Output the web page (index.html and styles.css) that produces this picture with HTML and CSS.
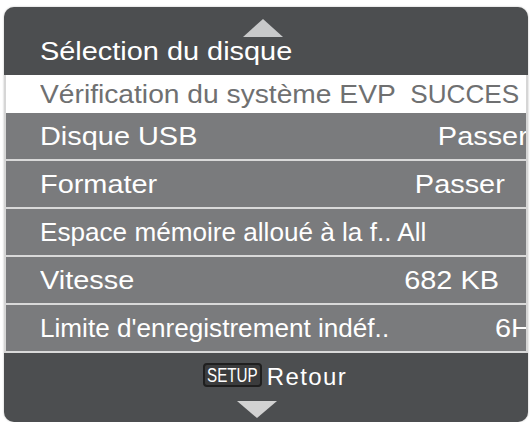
FILE: index.html
```html
<!DOCTYPE html>
<html lang="fr">
<head>
<meta charset="utf-8">
<title>Sélection du disque</title>
<link rel="stylesheet" href="styles.css">
</head>
<body>
<div class="panel">
  <div class="head">
    <span class="tri tri-up"></span>
    <div class="title"><span class="t wide">Sélection du disque</span></div>
  </div>
  <div class="list">
    <div class="row sel"><span class="t lab wide2">Vérification du système EVP</span><span class="t val narrow v-succes">SUCCES</span></div>
    <div class="row"><span class="t lab wide">Disque USB</span><span class="t val wide v-usb">Passer</span></div>
    <div class="row"><span class="t lab wide">Formater</span><span class="t val wide v-format">Passer</span></div>
    <div class="row"><span class="t lab narrow">Espace mémoire alloué à la f.. All</span></div>
    <div class="row"><span class="t lab wide">Vitesse</span><span class="t val wide v-speed">682 KB</span></div>
    <div class="row"><span class="t lab narrow">Limite d'enregistrement indéf..</span><span class="t val wide v-limit">6H</span></div>
  </div>
  <div class="foot">
    <div class="back">
      <span class="key"><span class="key-text">SETUP</span></span>
      <span class="retour">Retour</span>
    </div>
    <span class="tri tri-down"></span>
  </div>
</div>
</body>
</html>
```
FILE: styles.css
```css
body {
  margin: 0;
  background: #ffffff;
  font-family: "Liberation Sans", Arial, Helvetica, sans-serif;
}

.panel {
  margin: 7px 4px 0 4px;
  width: 524px;
  height: 415px;
  border-radius: 10px;
  overflow: hidden;
  background: #4c4e50;
  display: flex;
  flex-direction: column;
  box-shadow: 0 0 2px rgba(0, 0, 0, 0.3);
}

.head {
  height: 68px;
  box-sizing: border-box;
  padding-top: 12px;
  display: flex;
  flex-direction: column;
}

.tri {
  display: block;
  width: 0;
  height: 0;
  border-left: 20px solid transparent;
  border-right: 20px solid transparent;
}

.tri-up {
  align-self: center;
  margin-right: 6px;
  border-bottom: 18px solid #c8c9ca;
}

.title {
  height: 28px;
  line-height: 28px;
  padding-left: 36px;
  color: #ffffff;
  font-size: 25px;
  white-space: nowrap;
}

.list {
  border-left: 2px solid #d6d6d6;
  border-right: 2px solid #d6d6d6;
}

.row {
  display: flex;
  justify-content: space-between;
  align-items: center;
  height: 46px;
  border-bottom: 2px solid #d9d9d9;
  background: #7a7b7d;
  color: #ffffff;
  font-size: 25px;
  line-height: 46px;
  padding-left: 34px;
  overflow: hidden;
  white-space: nowrap;
}

.row.sel {
  height: 38px;
  line-height: 38px;
  border-bottom: 0;
  background: #ffffff;
  color: #6f7071;
}

.t {
  display: inline-block;
  transform-origin: left center;
}

.wide { transform: scaleX(1.156); }
.wide2 { transform: scaleX(1.128); }
.narrow { transform: scaleX(1.045); }

.val { transform-origin: right center; }

.v-succes { margin-right: 7px; }
.v-usb { margin-right: -2px; }
.v-format { margin-right: 21px; }
.v-speed { margin-right: 27px; }
.v-limit { margin-right: -6px; }

.foot {
  height: 69px;
  box-sizing: border-box;
  padding-top: 10px;
  display: flex;
  flex-direction: column;
  align-items: center;
}

.back {
  display: flex;
  align-items: flex-start;
  gap: 5px;
  padding-left: 18px;
  height: 24px;
}

.key {
  width: 59px;
  height: 24px;
  box-sizing: border-box;
  border: 2px solid #1f1f1f;
  border-radius: 4px;
  background: #3b3c3d;
  color: #ffffff;
  font-size: 20px;
  display: flex;
  align-items: center;
  justify-content: center;
}

.key-text {
  display: inline-block;
  transform: scaleX(0.76);
}

.retour {
  color: #ffffff;
  font-size: 24px;
  letter-spacing: 1.4px;
  line-height: 24px;
  padding-top: 2px;
}

.tri-down {
  margin-top: 14px;
  margin-right: 18px;
  border-top: 17px solid #d2d2d2;
}
```
